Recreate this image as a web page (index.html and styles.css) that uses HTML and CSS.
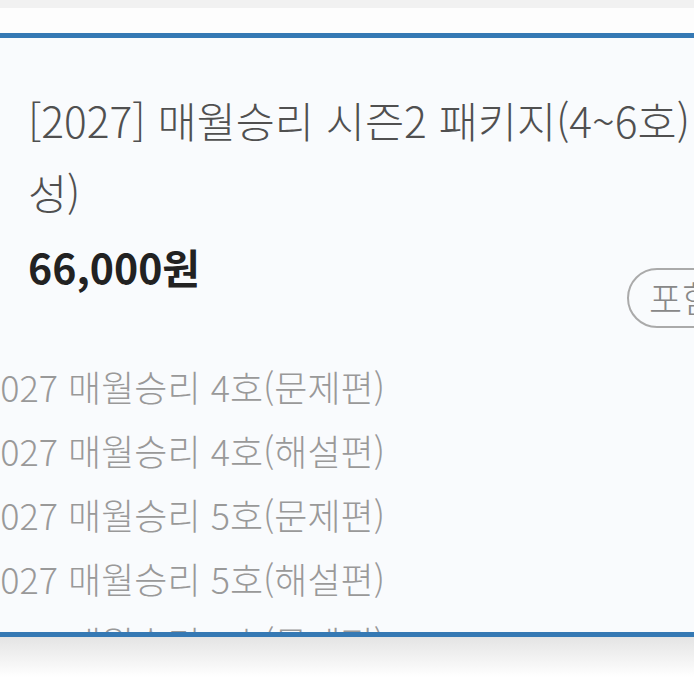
FILE: index.html
```html
<!DOCTYPE html>
<html lang="ko">
<head>
	<meta charset="UTF-8">
	<title>매월승리 시즌2 패키지</title>
	<link rel="stylesheet" href="styles.css">
</head>
<body>
	<div class="topbar"></div>
	<div class="gapbar"></div>
	<div class="sheet">
		<div class="panel">
			<div class="title">
				<div class="line">[2027] 매월승리 시즌2 패키지(4~6호)</div>
				<div class="line">성)</div>
			</div>
			<div class="pricerow">
				<div class="price">66,000원</div>
				<span class="pill">포함</span>
			</div>
			<ul class="items">
				<li>2027 매월승리 4호(문제편)</li>
				<li>2027 매월승리 4호(해설편)</li>
				<li>2027 매월승리 5호(문제편)</li>
				<li>2027 매월승리 5호(해설편)</li>
				<li>2027 매월승리 6호(문제편)</li>
			</ul>
		</div>
	</div>
	<div class="shade"></div>
</body>
</html>
```

FILE: styles.css
```css
html,body{
	margin: 0;
	padding: 0;
	background-color: #fff;
	overflow: hidden;
	font-family: "Noto Sans CJK KR", "Noto Sans", sans-serif;
}
.topbar{
	height: 8px;
	background-color: #f1f1f1;
}
.gapbar{
	height: 25px;
	background-color: #fdfdfd;
}
.sheet{
	border-top: 5px solid #3579b4;
	border-bottom: 5px solid #3579b4;
	background-color: #f9fbfd;
}
.panel{
	width: 800px;
	height: 594px;
	overflow: hidden;
	padding: 46px 28px 0;
	box-sizing: border-box;
}
.title{
	font-size: 42.5px;
	font-weight: 300;
	color: #505050;
	line-height: 72px;
	white-space: nowrap;
}
.pricerow{
	display: flex;
	align-items: flex-start;
	margin-top: 8px;
}
.price{
	font-size: 41px;
	font-weight: 700;
	color: #222;
	line-height: 60px;
}
.pill{
	margin-left: auto;
	margin-top: 32px;
	width: 145px;
	height: 60px;
	box-sizing: border-box;
	border: 2px solid #aaa;
	border-radius: 30px;
	padding-left: 20px;
	line-height: 54px;
	font-size: 36px;
	font-weight: 300;
	color: #888;
}
.items{
	margin: 26px 0 0 -47px;
	padding: 0;
	list-style: none;
}
.items li{
	font-size: 36px;
	font-weight: 300;
	color: #999;
	line-height: 64px;
	white-space: nowrap;
}
.shade{
	height: 40px;
	background: linear-gradient(#e4e4e4, #fff);
}
```
